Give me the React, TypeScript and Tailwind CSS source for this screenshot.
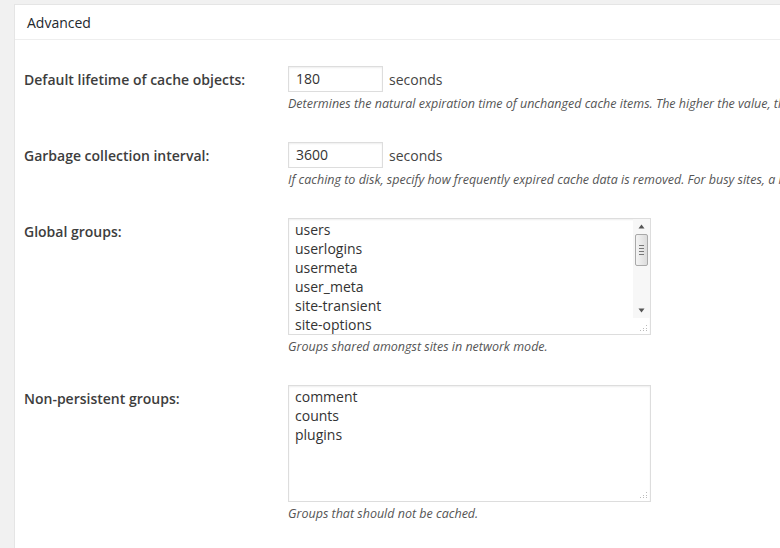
const FONT = { fontFamily: '"Open Sans", "Liberation Sans", sans-serif' };

const globalGroups = ["users", "userlogins", "usermeta", "user_meta", "site-transient", "site-options"];

const nonPersistent = ["comment", "counts", "plugins"];

function Grip() {
  return (
    <svg className="absolute bottom-[2px] right-[2px]" width="8" height="8" viewBox="0 0 8 8">
      <rect x="6" y="1" width="1" height="1" fill="#bbb" />
      <rect x="6" y="4" width="1" height="1" fill="#bbb" />
      <rect x="3" y="4" width="1" height="1" fill="#bbb" />
      <rect x="6" y="6" width="1" height="1" fill="#bbb" />
      <rect x="3" y="6" width="1" height="1" fill="#bbb" />
      <rect x="0" y="6" width="1" height="1" fill="#bbb" />
    </svg>
  );
}

function Scrollbar() {
  return (
    <div className="absolute top-0 right-0 bottom-[16px] w-[17px] flex flex-col items-center bg-[#f7f7f7]">
      <svg className="mt-[5px]" width="7" height="5" viewBox="0 0 7 5">
        <path d="M3.5 0.5 L6.5 4.5 L0.5 4.5 Z" fill="#555" />
      </svg>
      <div className="mt-[5px] w-[13px] h-[32px] rounded-[2px] border border-[#a9a9a9] bg-gradient-to-r from-[#f4f4f4] to-[#dcdcdc] flex flex-col items-center justify-center gap-[2px]">
        <div className="w-[5px] h-px bg-[#777]" />
        <div className="w-[5px] h-px bg-[#777]" />
        <div className="w-[5px] h-px bg-[#777]" />
        <div className="w-[5px] h-px bg-[#777]" />
      </div>
      <div className="flex-1" />
      <svg className="mb-[5px]" width="7" height="5" viewBox="0 0 7 5">
        <path d="M0.5 0.5 L6.5 0.5 L3.5 4.5 Z" fill="#555" />
      </svg>
    </div>
  );
}

function Area({ lines, scroll }: { lines: string[]; scroll?: boolean }) {
  return (
    <div className="relative w-[363px] h-[117px] border border-[#ddd] bg-white shadow-[inset_0_1px_2px_rgba(0,0,0,0.07)] overflow-hidden">
      <div className="px-[6px] pt-[1px] text-[14px] leading-[19px] text-[#333]">
        {lines.map((l) => (
          <div key={l}>{l}</div>
        ))}
      </div>
      {scroll && <Scrollbar />}
      <Grip />
    </div>
  );
}

function Row({ label, children }: { label: string; children: React.ReactNode }) {
  return (
    <div className="flex py-[15px]">
      <div className="w-[264px] shrink-0 pt-[5px] text-[14px] leading-[18px] font-semibold text-[#3d3d3d]">
        {label}
      </div>
      <div>{children}</div>
    </div>
  );
}

function Desc({ children }: { children: React.ReactNode }) {
  return (
    <p className="mt-[3px] text-[12.5px] leading-[17px] italic text-[#555] whitespace-nowrap">{children}</p>
  );
}

function NumberField({ value }: { value: string }) {
  return (
    <div className="flex items-center">
      <div className="w-[95px] h-[26px] border border-[#ddd] bg-white shadow-[inset_0_1px_2px_rgba(0,0,0,0.07)] px-[7px] text-[14px] leading-[24px] text-[#333]">
        {value}
      </div>
      <span className="ml-[6px] text-[14px] text-[#444]">seconds</span>
    </div>
  );
}

export default function App() {
  return (
    <div className="w-[780px] h-[548px] overflow-hidden bg-[#f1f1f1]" style={FONT}>
      <div className="ml-[14px] mt-[4px] w-[900px] h-[600px] bg-white border border-[#e5e5e5]">
        <div className="h-[35px] px-[12px] flex items-center border-b border-[#eee] text-[14px] text-[#23282d]">
          Advanced
        </div>
        <div className="pl-[9px] pt-[11px]">
          <Row label="Default lifetime of cache objects:">
            <NumberField value="180" />
            <Desc>
              Determines the natural expiration time of unchanged cache items. The higher the value, the larger the cache.
            </Desc>
          </Row>
          <Row label="Garbage collection interval:">
            <NumberField value="3600" />
            <Desc>
              If caching to disk, specify how frequently expired cache data is removed. For busy sites, a lower value is best.
            </Desc>
          </Row>
          <Row label="Global groups:">
            <Area lines={globalGroups} scroll />
            <Desc>Groups shared amongst sites in network mode.</Desc>
          </Row>
          <Row label="Non-persistent groups:">
            <Area lines={nonPersistent} />
            <Desc>Groups that should not be cached.</Desc>
          </Row>
        </div>
      </div>
    </div>
  );
}
